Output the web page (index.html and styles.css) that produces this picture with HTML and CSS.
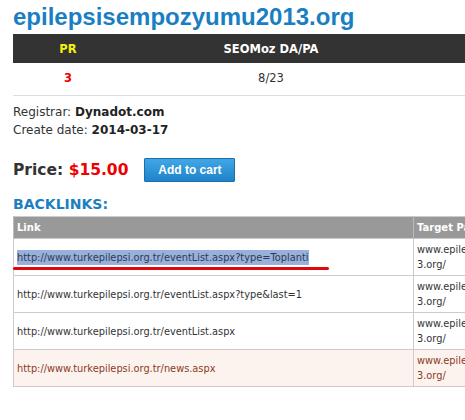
FILE: index.html
```html
<!DOCTYPE html>
<html>
<head>
<meta charset="utf-8">
<link rel="stylesheet" href="styles.css">
</head>
<body>
<div class="page">
  <h1 class="domain">epilepsisempozyumu2013.org</h1>
  <table class="stats">
    <thead>
      <tr><th class="c1 pr">PR</th><th class="c2">SEOMoz DA/PA</th><th class="c3"></th></tr>
    </thead>
    <tbody>
      <tr><td class="c1 red">3</td><td class="c2">8/23</td><td class="c3"></td></tr>
    </tbody>
  </table>
  <div class="info">
    <div>Registrar: <b>Dynadot.com</b></div>
    <div>Create date: <b>2014-03-17</b></div>
  </div>
  <div class="buy">
    <div class="price">Price: <span class="amount">$15.00</span></div>
    <button class="cart">Add to cart</button>
  </div>
  <h2 class="section">BACKLINKS:</h2>
  <table class="links">
    <thead>
      <tr><th class="lc1">Link</th><th class="lc2">Target Page</th></tr>
    </thead>
    <tbody>
      <tr>
        <td class="lc1 marked"><span class="sel">http://www.turkepilepsi.org.tr/eventList.aspx?type=Toplanti</span><span class="redline"></span></td>
        <td class="lc2">www.epilepsisempozyumu2013.org/</td>
      </tr>
      <tr>
        <td class="lc1">http://www.turkepilepsi.org.tr/eventList.aspx?type&amp;last=1</td>
        <td class="lc2">www.epilepsisempozyumu2013.org/</td>
      </tr>
      <tr>
        <td class="lc1">http://www.turkepilepsi.org.tr/eventList.aspx</td>
        <td class="lc2">www.epilepsisempozyumu2013.org/</td>
      </tr>
      <tr class="hot">
        <td class="lc1">http://www.turkepilepsi.org.tr/news.aspx</td>
        <td class="lc2">www.epilepsisempozyumu2013.org/</td>
      </tr>
    </tbody>
  </table>
</div>
</body>
</html>
```
FILE: styles.css
```css
html, body {
  margin: 0;
  padding: 0;
  background: #fff;
}
body {
  font-family: "DejaVu Sans", Verdana, sans-serif;
  color: #333;
  overflow: hidden;
}
.page {
  width: 452px;
  padding-left: 13px;
  overflow: hidden;
}
.domain {
  font-family: "Liberation Sans", Arial, sans-serif;
  font-size: 24px;
  line-height: 28px;
  font-weight: bold;
  color: #1a7fc2;
  margin: 3px 0 3px 0;
  white-space: nowrap;
}
.stats {
  border-collapse: collapse;
  width: 620px;
  table-layout: fixed;
  font-size: 11.5px;
}
.stats .c1 { width: 110px; }
.stats .c2 { width: 296px; }
.stats .c3 { width: 214px; }
.stats th {
  background: #333;
  color: #fff;
  height: 29px;
  padding: 0;
  text-align: center;
  font-weight: bold;
}
.stats th.pr { color: #f2f20a; }
.stats td {
  height: 30px;
  padding: 0 0 2px 0;
  text-align: center;
  border-bottom: 1px solid #ddd;
  color: #333;
}
.stats td.red {
  color: #e00;
  font-weight: bold;
}
.info {
  margin-top: 7px;
  font-size: 12px;
  line-height: 18px;
  color: #333;
}
.info b { color: #222; }
.buy {
  display: flex;
  align-items: center;
  gap: 16px;
  margin-top: 19px;
}
.price {
  font-size: 15.5px;
  font-weight: bold;
  color: #333;
}
.amount { color: #e00; }
.cart {
  width: 91px;
  height: 24px;
  padding: 0;
  border: 1px solid #1b6fae;
  border-radius: 1px;
  background: linear-gradient(#42a6e6, #1e84c9);
  color: #fff;
  font-family: "Liberation Sans", Arial, sans-serif;
  font-size: 12px;
  font-weight: bold;
}
.section {
  margin: 14px 0 4px 0;
  font-size: 14px;
  line-height: 16px;
  font-weight: bold;
  color: #1d7fbf;
}
.links {
  border-collapse: collapse;
  table-layout: fixed;
  width: 557px;
  font-size: 9.8px;
  border: 1px solid #ccc;
}
.links .lc1 { width: 393px; }
.links .lc2 { width: 152px; }
.links th {
  background: #999;
  color: #fff;
  height: 21px;
  padding: 0 3px;
  text-align: left;
  font-size: 10px;
  font-weight: bold;
  border-left: 1px solid #bbb;
}
.links td {
  height: 36px;
  padding: 0 3px;
  line-height: 15px;
  vertical-align: middle;
  border: 1px solid #ccc;
  word-break: break-all;
  color: #333;
}
.links td.marked { position: relative; }
.sel {
  display: inline-block;
  background: #98b0dc;
  line-height: 15px;
  color: #2f3a50;
}
.redline {
  position: absolute;
  left: -1px;
  top: 28px;
  width: 316px;
  height: 3px;
  background: #e0080c;
  border-radius: 2px;
}
.links tr.hot td {
  background: #fdf3ee;
  color: #8b3a1f;
}
```
